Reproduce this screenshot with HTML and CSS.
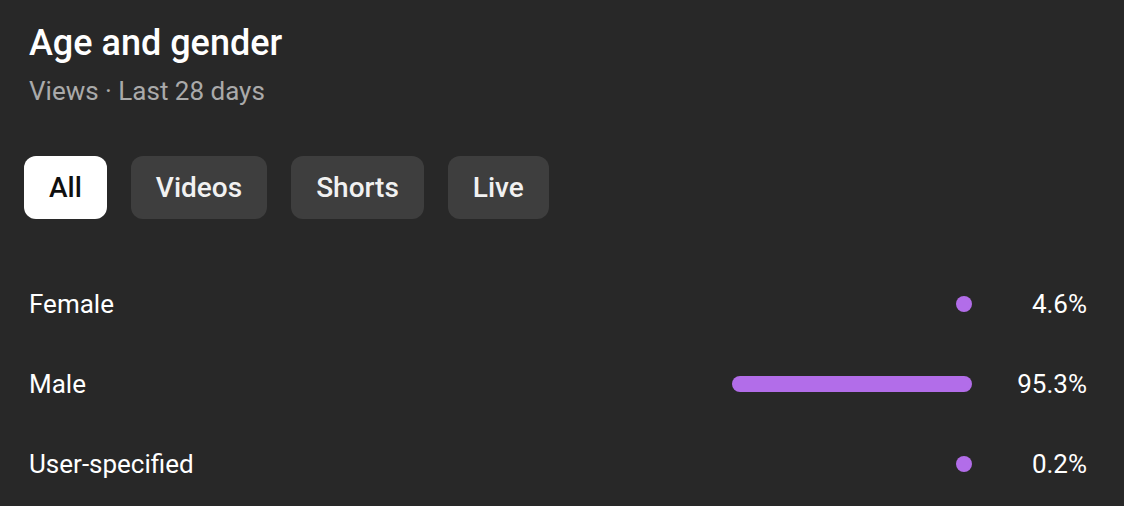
FILE: index.html
```html
<!DOCTYPE html>
<html>
<head>
<meta charset="utf-8">
<link rel="stylesheet" href="styles.css">
</head>
<body>
<div class="card">
  <h1 class="title">Age and gender</h1>
  <div class="subtitle">Views · Last 28 days</div>
  <div class="chips">
    <button class="chip active">All</button>
    <button class="chip">Videos</button>
    <button class="chip">Shorts</button>
    <button class="chip">Live</button>
  </div>
  <div class="rows">
    <div class="row">
      <span class="label">Female</span>
      <div class="track"><div class="bar" style="width:4.6%"></div></div>
      <span class="pct">4.6%</span>
    </div>
    <div class="row">
      <span class="label">Male</span>
      <div class="track"><div class="bar" style="width:95.3%"></div></div>
      <span class="pct">95.3%</span>
    </div>
    <div class="row">
      <span class="label">User-specified</span>
      <div class="track"><div class="bar" style="width:0.2%"></div></div>
      <span class="pct">0.2%</span>
    </div>
  </div>
</div>
</body>
</html>
```

FILE: styles.css
```css
html, body {
  margin: 0;
  padding: 0;
  background: #282828;
}
body {
  font-family: Roboto, "Noto Sans", sans-serif;
  color: #fff;
  width: 1124px;
  height: 506px;
  overflow: hidden;
}
.card {
  padding: 21px 37px 0 29px;
}
.title {
  margin: 0;
  font-size: 36px;
  font-weight: 500;
  line-height: 44px;
}
.subtitle {
  font-size: 26px;
  line-height: 32px;
  color: #aaaaaa;
  margin-top: 10px;
}
.chips {
  display: flex;
  gap: 24px;
  margin-top: 49px;
  margin-left: -5px;
}
.chip {
  font-family: Roboto, "Noto Sans", sans-serif;
  font-size: 28px;
  font-weight: 500;
  height: 63px;
  padding: 0 25px;
  border: none;
  border-radius: 12px;
  background: #3e3e3e;
  color: #f1f1f1;
}
.chip.active {
  background: #fff;
  color: #0f0f0f;
}
.rows {
  margin-top: 45px;
  display: flex;
  flex-direction: column;
}
.row {
  display: flex;
  align-items: center;
  height: 80px;
}
.label {
  flex: 1;
  font-size: 26px;
}
.track {
  width: 252px;
  display: flex;
  justify-content: flex-end;
}
.bar {
  min-width: 16px;
  height: 16px;
  border-radius: 8px;
  background: #b26de9;
}
.pct {
  width: 115px;
  text-align: right;
  font-size: 26px;
}
```
